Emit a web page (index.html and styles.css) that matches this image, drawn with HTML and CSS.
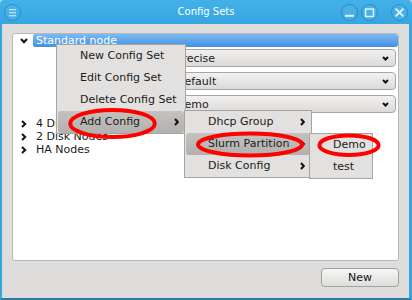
FILE: index.html
```html
<!DOCTYPE html>
<html>
<head>
<meta charset="utf-8">
<title>Config Sets</title>
<link rel="stylesheet" href="styles.css">
</head>
<body>
<div class="window">
  <header class="titlebar">
    <div class="tb-left">
      <span class="tb-btn">
        <svg width="17" height="17" viewBox="0 0 17 17"><circle class="ring" cx="8.5" cy="8.5" r="8"/><path class="sym thin" d="M5 5.7H12M5 8.7H12M5 11.7H12"/></svg>
      </span>
    </div>
    <div class="title">Config Sets</div>
    <div class="tb-right">
      <span class="tb-btn">
        <svg width="17" height="17" viewBox="0 0 17 17"><circle class="ring" cx="8.5" cy="8.5" r="8"/><path class="sym" d="M4 11.8H13"/></svg>
      </span>
      <span class="tb-btn gap-s">
        <svg width="17" height="17" viewBox="0 0 17 17"><circle class="ring" cx="8.5" cy="8.5" r="8"/><rect class="sym mid" x="4.6" y="5" width="7.8" height="7.5"/></svg>
      </span>
      <span class="tb-btn gap-l">
        <svg width="17" height="17" viewBox="0 0 17 17"><circle class="ring" cx="8.5" cy="8.5" r="8"/><path class="sym" d="M4.6 4.6L12.4 12.4M12.4 4.6L4.6 12.4"/></svg>
      </span>
    </div>
  </header>
  <main class="content">
    <div class="tree">
      <div class="row">
        <span class="exp exp-down"><svg width="8" height="6" viewBox="0 0 8 6"><polyline class="chev" points="1,1 4,4.2 7,1"/></svg></span>
        <span class="label selected">Standard node</span>
      </div>
      <div class="combos">
        <div class="combo"><span>Precise</span><svg width="7" height="5" viewBox="0 0 7 5"><polyline class="chev" points="1,1 3.5,3.5 6,1"/></svg></div>
        <div class="combo"><span>Default</span><svg width="7" height="5" viewBox="0 0 7 5"><polyline class="chev" points="1,1 3.5,3.5 6,1"/></svg></div>
        <div class="combo"><span>Demo</span><svg width="7" height="5" viewBox="0 0 7 5"><polyline class="chev" points="1,1 3.5,3.5 6,1"/></svg></div>
      </div>
      <div class="row">
        <span class="exp exp-right"><svg width="6" height="8" viewBox="0 0 6 8"><polyline class="chev" points="1,1 4.2,4 1,7"/></svg></span>
        <span class="label">4 Disk Nodes</span>
      </div>
      <div class="row">
        <span class="exp exp-right"><svg width="6" height="8" viewBox="0 0 6 8"><polyline class="chev" points="1,1 4.2,4 1,7"/></svg></span>
        <span class="label">2 Disk Nodes</span>
      </div>
      <div class="row">
        <span class="exp exp-right"><svg width="6" height="8" viewBox="0 0 6 8"><polyline class="chev" points="1,1 4.2,4 1,7"/></svg></span>
        <span class="label">HA Nodes</span>
      </div>
    </div>
    <div class="footer">
      <button class="btn">New</button>
    </div>
  </main>
</div>

<div class="menu m1">
  <div class="item">New Config Set</div>
  <div class="item">Edit Config Set</div>
  <div class="item">Delete Config Set</div>
  <div class="item active">Add Config<svg class="sub" width="5" height="8" viewBox="0 0 5 8"><polyline class="chev" points="1,1 3.8,4 1,7"/></svg></div>
</div>
<div class="menu m2">
  <div class="item">Dhcp Group<svg class="sub" width="5" height="8" viewBox="0 0 5 8"><polyline class="chev" points="1,1 3.8,4 1,7"/></svg></div>
  <div class="item active">Slurm Partition<svg class="sub" width="5" height="8" viewBox="0 0 5 8"><polyline class="chev" points="1,1 3.8,4 1,7"/></svg></div>
  <div class="item">Disk Config<svg class="sub" width="5" height="8" viewBox="0 0 5 8"><polyline class="chev" points="1,1 3.8,4 1,7"/></svg></div>
</div>
<div class="menu m3">
  <div class="item">Demo</div>
  <div class="item">test</div>
</div>

<svg class="marks" width="412" height="300" viewBox="0 0 412 300">
  <defs>
    <filter id="soft" x="-10%" y="-30%" width="120%" height="160%"><feGaussianBlur stdDeviation="0.6"/></filter>
  </defs>
  <g class="ellipses" filter="url(#soft)">
    <ellipse cx="112.5" cy="123.5" rx="42.3" ry="13.5"/>
    <ellipse cx="250" cy="144.5" rx="52" ry="11"/>
    <ellipse cx="349" cy="145.2" rx="29.6" ry="9.8"/>
  </g>
</svg>
</body>
</html>
```

FILE: styles.css
```css
* { box-sizing: border-box; }
html, body { margin: 0; padding: 0; }
body {
  width: 412px;
  height: 300px;
  overflow: hidden;
  position: relative;
  font-family: "DejaVu Sans", "Liberation Sans", sans-serif;
  font-size: 11px;
  color: #1c1c1c;
  background: #dfdddb;
}

.window {
  display: flex;
  flex-direction: column;
  height: 300px;
}

/* title bar */
.titlebar {
  flex: none;
  height: 24px;
  display: grid;
  grid-template-columns: 1fr auto 1fr;
  align-items: center;
  padding: 0 4px;
  background: linear-gradient(#43b1e9, #37a6e0);
  border-radius: 4px 4px 0 0;
  color: #fff;
}
.title { font-size: 10px; line-height: 12px; }
.tb-left { display: flex; }
.tb-right { display: flex; justify-content: flex-end; }
.tb-btn { display: block; width: 17px; height: 17px; }
.tb-btn svg { display: block; }
.gap-s { margin-left: 3px; }
.gap-l { margin-left: 13px; }
.ring { fill: rgba(255,255,255,0.06); stroke: #2a8bc1; stroke-width: 1; }
.sym { fill: none; stroke: #dcf2fc; stroke-width: 2; }
.sym.thin { stroke-width: 1.1; }
.sym.mid { stroke-width: 1.5; }

/* content */
.content {
  flex: 1;
  display: flex;
  flex-direction: column;
  gap: 7px;
  padding: 9px 10px 11px 10px;
  border-style: solid;
  border-color: #36a4dd;
  border-bottom-color: #2b7da8;
  border-width: 0 3px 2px 2px;
  background: #dfdddb;
}

.tree {
  flex: 1;
  background: #fff;
  border: 1px solid #b9b7b5;
  border-radius: 3px;
}

.row {
  display: flex;
  height: 13px;
  line-height: 13px;
}
.exp {
  flex: none;
  width: 20px;
  display: flex;
  align-items: center;
}
.exp svg { display: block; }
.exp-down svg { margin-left: 7px; }
.exp-right svg { margin-left: 8px; }
.chev { fill: none; stroke: #111; stroke-width: 2; }

.label {
  flex: 1;
  padding-left: 3px;
  white-space: nowrap;
  color: #1a1a1a;
}
.label.selected {
  color: #fff;
  background: linear-gradient(#7bbaf1, #4490e1);
  border-radius: 2px 3px 3px 2px;
}

.combos {
  display: flex;
  flex-direction: column;
  gap: 5px;
  padding: 2px 2px 4px 157px;
}
.combo {
  height: 18px;
  display: flex;
  align-items: center;
  justify-content: space-between;
  padding: 0 6px 0 5px;
  border: 1px solid #a8a6a4;
  border-radius: 4px;
  background: linear-gradient(#f2f1f0, #dcdad8);
  color: #1a1a1a;
  white-space: nowrap;
}
.combo svg { display: block; }

.footer {
  flex: none;
  display: flex;
  justify-content: flex-end;
}
.btn {
  width: 78px;
  height: 19px;
  padding: 0;
  border: 1px solid #a4a2a0;
  border-radius: 4px;
  background: linear-gradient(#f6f6f5, #dedddb);
  font-family: "DejaVu Sans", "Liberation Sans", sans-serif;
  font-size: 11px;
  color: #111;
}

/* popup menus */
.menu {
  position: absolute;
  background: #e3e1df;
  border: 1px solid #a7a5a3;
}
.m1 { left: 56px; top: 44px; width: 130px; }
.m2 { left: 184px; top: 110px; width: 128px; }
.m3 { left: 309px; top: 133px; width: 64px; }
.item {
  position: relative;
  height: 22px;
  line-height: 22px;
  margin: 0 1px;
  padding-left: 22px;
  border-radius: 3px;
  white-space: nowrap;
  color: #1a1a1a;
}
.item.active { background: linear-gradient(#c4c2bf, #b3b1ae); }
.item .sub { position: absolute; right: 5px; top: 7px; display: block; }

/* annotation marks */
.marks {
  position: absolute;
  left: 0;
  top: 0;
  pointer-events: none;
}
.ellipses { fill: none; stroke: #ff0000; stroke-width: 4; }
```
